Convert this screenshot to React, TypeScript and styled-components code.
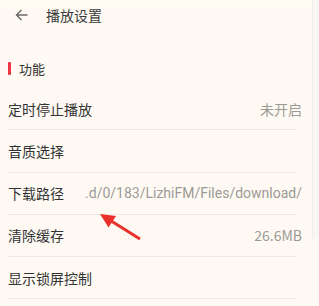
import React from 'react'
import styled, { createGlobalStyle } from 'styled-components'

const GlobalStyle = createGlobalStyle`
  html, body {
    margin: 0;
    padding: 0;
    background: #fefaf3;
  }
  body {
    font-family: Roboto, "Noto Sans CJK SC", sans-serif;
  }
`

const Screen = styled.div`
  position: relative;
  width: 319px;
  height: 306px;
  overflow: hidden;
  background: #fefaf3;
`

const Upper = styled.div`
  display: flex;
`

const Panel = styled.div`
  width: 312px;
  flex-shrink: 0;
  display: flex;
  flex-direction: column;
`

const Gutter = styled.div`
  flex-grow: 1;
  background: #f8f7f5;
  border-left: 1px solid #f1efec;
  height: 239px;
`

const TopBand = styled.div`
  height: 7px;
  background: #fffdf1;
`

const Header = styled.div`
  height: 16px;
  display: flex;
  align-items: center;
  padding-left: 15px;
  gap: 18px;
  color: #3a3a3a;
  font-size: 14px;
  font-family: "Noto Sans CJK SC", sans-serif;
`

const Section = styled.div`
  display: flex;
  align-items: center;
  gap: 8px;
  height: 20px;
  margin-top: 35px;
  padding-left: 8px;
  font-size: 13px;
  color: #333;
  font-family: "Noto Sans CJK SC", sans-serif;
`

const Mark = styled.span`
  width: 3px;
  height: 13px;
  border-radius: 1px;
  background: #ee3344;
`

const List = styled.div`
  margin-top: 10px;
`

const Row = styled.div`
  height: 41.25px;
  display: flex;
  align-items: center;
  margin: 0 15px 0 8px;
  border-bottom: 1px solid #efebe3;
`

const Label = styled.span`
  font-size: 14px;
  color: #333;
  font-family: "Noto Sans CJK SC", sans-serif;
  white-space: nowrap;
`

const Value = styled.span<{ $path?: boolean }>`
  margin-left: auto;
  margin-right: -5px;
  font-size: 14px;
  color: #9c9a97;
  white-space: nowrap;
  font-family: ${p => (p.$path ? 'Roboto, sans-serif' : '"Noto Sans CJK SC", Roboto, sans-serif')};
`

const Pointer = styled.svg`
  position: absolute;
  left: 96px;
  top: 208px;
`

function BackIcon() {
  return (
    <svg width='13' height='12' viewBox='0 0 13 12' fill='none' stroke='#6a6a6a' strokeWidth='1.4'>
      <path d='M12.5 6H1.5M6.5 1L1.5 6l5 5' />
    </svg>
  )
}

const rows: { label: string; value?: string; path?: boolean }[] = [
  { label: '定时停止播放', value: '未开启' },
  { label: '音质选择' },
  { label: '下载路径', value: '.d/0/183/LizhiFM/Files/download/', path: true },
  { label: '清除缓存', value: '26.6MB' },
  { label: '显示锁屏控制' },
]

export default function App() {
  return (
    <Screen>
      <GlobalStyle />
      <Upper>
        <Panel>
          <TopBand />
          <Header>
            <BackIcon />
            <span>播放设置</span>
          </Header>
          <Section>
            <Mark />
            功能
          </Section>
          <List>
            {rows.map(r => (
              <Row key={r.label}>
                <Label>{r.label}</Label>
                {r.value ? <Value $path={r.path}>{r.value}</Value> : null}
              </Row>
            ))}
          </List>
        </Panel>
        <Gutter />
      </Upper>
      <Pointer width='50' height='32' viewBox='96 208 50 32'>
        <line x1='140' y1='239' x2='108' y2='219' stroke='#e8322b' strokeWidth='3' />
        <polygon points='100,214 116,216 108.5,227.5' fill='#e8322b' />
      </Pointer>
    </Screen>
  )
}
